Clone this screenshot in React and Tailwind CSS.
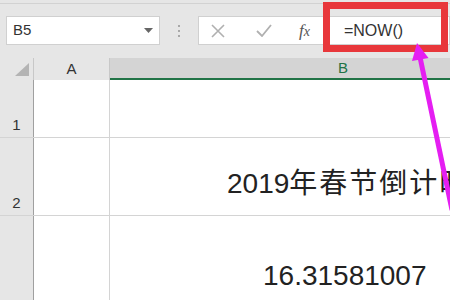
export default function App() {
  return (
    <div className="relative h-[300px] w-[450px] overflow-hidden bg-[#e6e6e6] font-['Liberation_Sans','Noto_Sans_CJK_SC',sans-serif]">
      <div className="h-[4px] border-b border-[#d2d2d2]" />

      {/* formula bar */}
      <div className="flex h-[54px] items-start pt-[12px]">
        <div className="ml-[6px] flex h-[29px] w-[154px] shrink-0 items-center justify-between border border-[#d0d0d0] bg-white pl-[6px] pr-[6px]">
          <span className="text-[15px] text-[#333]">B5</span>
          <svg width="9" height="5" viewBox="0 0 9 5">
            <path d="M0 0 H9 L4.5 5 Z" fill="#666" />
          </svg>
        </div>
        <div className="flex w-[38px] shrink-0 flex-col items-center gap-[3px] pt-[9px]">
          <span className="h-[2px] w-[2px] bg-[#a8a8a8]" />
          <span className="h-[2px] w-[2px] bg-[#a8a8a8]" />
          <span className="h-[2px] w-[2px] bg-[#a8a8a8]" />
        </div>
        <div className="flex h-[29px] min-w-0 flex-1 items-center border border-[#d0d0d0] bg-white">
          <svg className="ml-[12px] shrink-0" width="14" height="14" viewBox="0 0 14 14">
            <path d="M1 1 L13 13 M13 1 L1 13" stroke="#b0b0b0" strokeWidth="1.6" />
          </svg>
          <svg className="ml-[31px] shrink-0" width="16" height="13" viewBox="0 0 16 13">
            <path d="M1 7 L6 12 L15 1" stroke="#b0b0b0" strokeWidth="1.8" fill="none" />
          </svg>
          <span className="ml-[27px] font-['Liberation_Serif',serif] text-[17px] italic text-[#555]">
            f<span className="text-[14px]">x</span>
          </span>
          <span className="ml-[34px] whitespace-nowrap text-[16px] text-[#333]">=NOW()</span>
        </div>
      </div>

      {/* column headers */}
      <div className="flex h-[22px]">
        <div className="relative w-[34px] shrink-0 border-r border-[#c8c8c8]">
          <svg className="absolute left-[15px] top-[5px]" width="14" height="13" viewBox="0 0 14 13">
            <path d="M14 0 V13 H0 Z" fill="#b4b4b4" />
          </svg>
        </div>
        <div className="flex w-[76px] shrink-0 items-center justify-center border-r border-[#c8c8c8] text-[15px] text-[#333]">A</div>
        <div className="flex min-w-0 flex-1 items-center border-b-2 border-[#217346] bg-[#d4d4d4] pl-[228px] text-[15px] text-[#217346]">B</div>
      </div>

      {/* rows */}
      <div className="flex h-[58px] border-b border-[#d4d4d4]">
        <div className="flex w-[34px] shrink-0 items-end justify-center border-r border-[#a0a0a0] pb-[1px] text-[15px] text-[#333]">1</div>
        <div className="w-[76px] shrink-0 border-r border-[#d4d4d4] bg-white" />
        <div className="min-w-0 flex-1 bg-white" />
      </div>
      <div className="flex h-[78px] border-b border-[#d4d4d4]">
        <div className="flex w-[34px] shrink-0 items-end justify-center border-r border-[#a0a0a0] pb-[1px] text-[15px] text-[#333]">2</div>
        <div className="w-[76px] shrink-0 border-r border-[#d4d4d4] bg-white" />
        <div className="flex min-w-0 flex-1 items-end overflow-hidden whitespace-nowrap bg-white pb-[17px] pl-[117px] text-[28px] leading-none text-[#222]">
          2019<span className="tracking-[2px]">年春节倒计时</span>
        </div>
      </div>
      <div className="flex h-[84px]">
        <div className="w-[34px] shrink-0 border-r border-[#a0a0a0]" />
        <div className="w-[76px] shrink-0 border-r border-[#d4d4d4] bg-white" />
        <div className="flex min-w-0 flex-1 items-end overflow-hidden whitespace-nowrap bg-white pb-[10px] pl-[153px] text-[28px] leading-none text-[#222]">
          16.31581007
        </div>
      </div>

      {/* annotation: red box and arrow */}
      <div className="absolute left-[323px] top-[2px] h-[50px] w-[125px] border-[7px] border-[#e8373b]" />
      <svg className="absolute left-0 top-0" width="450" height="300" viewBox="0 0 450 300">
        <path d="M420.3 58.6 L452 210" stroke="#e51ef2" strokeWidth="5" />
        <path d="M417 43 L428.5 58 L412 61 Z" fill="#e51ef2" />
      </svg>
    </div>
  );
}
